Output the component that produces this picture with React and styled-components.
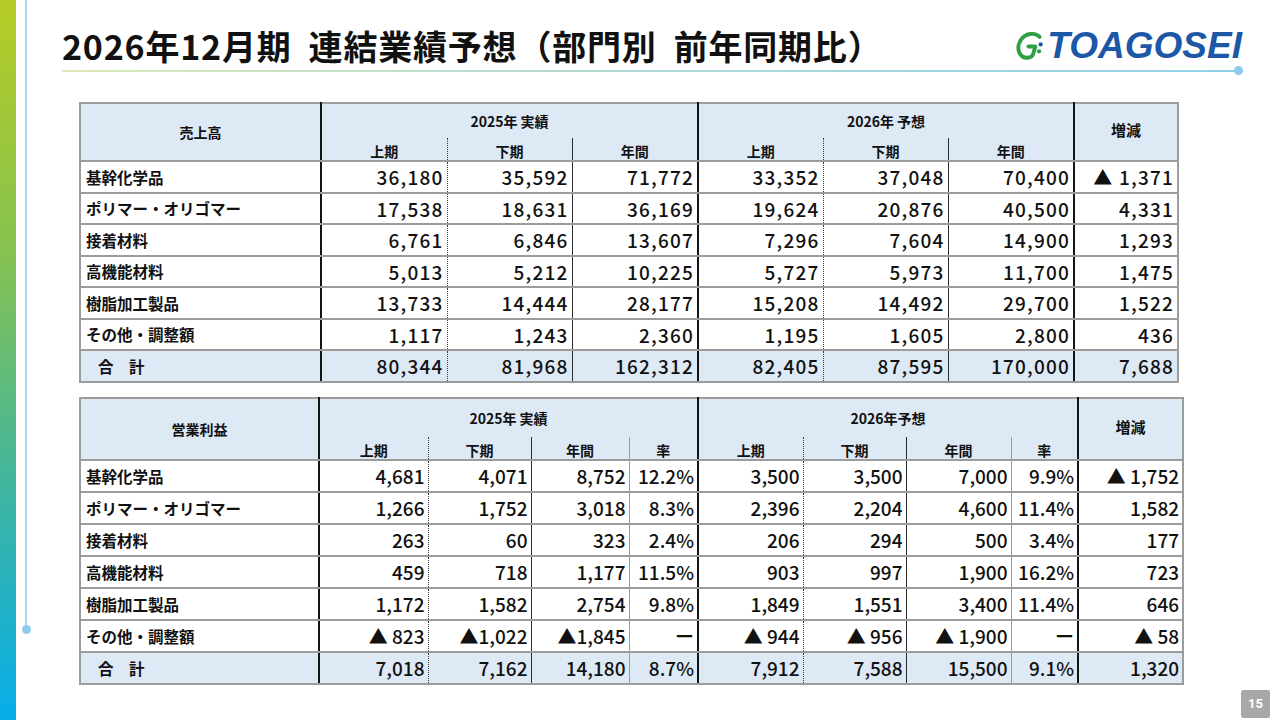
import React from "react";
import styled, { createGlobalStyle } from "styled-components";

const GlobalStyle = createGlobalStyle`
  body {
    margin: 0;
    background: #ffffff;
    font-family: "Noto Sans CJK JP", "Noto Sans", sans-serif;
    color: #111;
  }
`;

const Page = styled.div`
  width: 1280px;
  height: 720px;
  display: flex;
  overflow: hidden;
  background: #fff;
`;

const SideBar = styled.div`
  width: 16px;
  flex: 0 0 16px;
  background: linear-gradient(to bottom, #b6cc25 0%, #86c250 35%, #3fb5a0 68%, #06aeea 100%);
`;

const Rail = styled.div`
  width: 20px;
  flex: 0 0 20px;
  display: flex;
  flex-direction: column;
  align-items: center;
`;

const RailLine = styled.div`
  width: 2px;
  height: 627px;
  background: #a9d8ee;
`;

const RailDot = styled.div`
  width: 9px;
  height: 9px;
  border-radius: 50%;
  background: #8ccbec;
  margin-top: -2px;
`;

const Main = styled.div`
  flex: 1;
  display: flex;
  flex-direction: column;
  padding-top: 26px;
  min-width: 0;
`;

const TitleRow = styled.div`
  display: flex;
  align-items: center;
  justify-content: space-between;
  padding: 0 38px 0 26px;
  height: 40px;
`;

const Title = styled.h1`
  margin: 0;
  font-size: 34px;
  line-height: 40px;
  font-weight: 700;
  letter-spacing: 0.8px;
  white-space: pre;
`;

const Logo = styled.div`
  display: flex;
  align-items: center;
  gap: 1px;
`;

const LogoText = styled.span`
  font-family: "Liberation Sans", Arial, sans-serif;
  font-style: italic;
  font-weight: 700;
  font-size: 37px;
  line-height: 40px;
  color: #1c58a6;
`;

const RuleRow = styled.div`
  display: flex;
  align-items: center;
  padding-left: 26px;
`;

const Rule = styled.div`
  width: 1175px;
  height: 2px;
  background: linear-gradient(to right, #dbe9b4 0%, #b5dcd2 40%, #8ed0ea 100%);
`;

const RuleDot = styled.div`
  width: 9px;
  height: 9px;
  border-radius: 50%;
  background: #8ccbec;
  margin-left: -3px;
`;

const Table = styled.table`
  border-collapse: collapse;
  table-layout: fixed;
  width: ${(p) => p.$w}px;
  margin-left: 43px;
  margin-top: ${(p) => p.$top}px;
  border: 2px solid #9c9c9c;
`;

const borders = {
  group: "2px solid #141414",
  dot: "1px dotted #3a3a3a",
  thin: "1.5px solid #2a2a2a",
  gray: "1px solid #9c9c9c",
};

const HeadCell = styled.th`
  background: #dde9f5;
  font-weight: 700;
  font-size: ${(p) => (p.$big ? 15 : 14)}px;
  text-align: center;
  padding: 0;
  height: ${(p) => p.$h}px;
  vertical-align: ${(p) => p.$valign || "middle"};
  border-left: ${(p) => (p.$left ? borders[p.$left] : "none")};
  border-bottom: ${(p) => (p.$bottom ? "2px solid #9c9c9c" : "none")};
  line-height: 18px;
  padding-bottom: ${(p) => p.$pb || 0}px;
`;

const LabelCell = styled.td`
  font-size: 15.5px;
  font-weight: 700;
  padding: 0 0 0 ${(p) => (p.$total ? 17 : 5)}px;
  letter-spacing: ${(p) => (p.$total ? "6px" : "0")};
  height: ${(p) => p.$h}px;
  background: ${(p) => (p.$total ? "#dde9f5" : "#fff")};
  border-bottom: 2px solid #9c9c9c;
  white-space: nowrap;
  overflow: hidden;
`;

const NumCell = styled.td`
  font-size: 19px;
  line-height: 24px;
  font-weight: 500;
  text-align: right;
  padding: 1px 3px 0 0;
  letter-spacing: ${(p) => p.$ls}px;
  background: ${(p) => (p.$total ? "#dde9f5" : "#fff")};
  border-left: ${(p) => borders[p.$left]};
  border-bottom: 2px solid #9c9c9c;
  white-space: nowrap;
`;

const Footer = styled.div`
  display: flex;
  justify-content: flex-end;
  padding-right: 10px;
  margin-top: 5px;
`;

const PageNo = styled.div`
  width: 29px;
  height: 28px;
  background: #a8a8a8;
  color: #fff;
  font-family: "Roboto", sans-serif;
  font-weight: 700;
  font-size: 13px;
  display: flex;
  align-items: center;
  justify-content: center;
  border-radius: 2px;
`;

const salesRows = [
  ["基幹化学品", "36,180", "35,592", "71,772", "33,352", "37,048", "70,400", "▲ 1,371"],
  ["ポリマー・オリゴマー", "17,538", "18,631", "36,169", "19,624", "20,876", "40,500", "4,331"],
  ["接着材料", "6,761", "6,846", "13,607", "7,296", "7,604", "14,900", "1,293"],
  ["高機能材料", "5,013", "5,212", "10,225", "5,727", "5,973", "11,700", "1,475"],
  ["樹脂加工製品", "13,733", "14,444", "28,177", "15,208", "14,492", "29,700", "1,522"],
  ["その他・調整額", "1,117", "1,243", "2,360", "1,195", "1,605", "2,800", "436"],
  ["合 計", "80,344", "81,968", "162,312", "82,405", "87,595", "170,000", "7,688"],
];

const profitRows = [
  ["基幹化学品", "4,681", "4,071", "8,752", "12.2%", "3,500", "3,500", "7,000", "9.9%", "▲ 1,752"],
  ["ポリマー・オリゴマー", "1,266", "1,752", "3,018", "8.3%", "2,396", "2,204", "4,600", "11.4%", "1,582"],
  ["接着材料", "263", "60", "323", "2.4%", "206", "294", "500", "3.4%", "177"],
  ["高機能材料", "459", "718", "1,177", "11.5%", "903", "997", "1,900", "16.2%", "723"],
  ["樹脂加工製品", "1,172", "1,582", "2,754", "9.8%", "1,849", "1,551", "3,400", "11.4%", "646"],
  ["その他・調整額", "▲ 823", "▲1,022", "▲1,845", "ー", "▲ 944", "▲ 956", "▲ 1,900", "ー", "▲ 58"],
  ["合 計", "7,018", "7,162", "14,180", "8.7%", "7,912", "7,588", "15,500", "9.1%", "1,320"],
];

const salesSpec = {
  widths: [241, 126, 125, 126, 125, 125, 126, 104],
  left: ["group", "dot", "thin", "group", "dot", "thin", "group"],
  subs: ["上期", "下期", "年間"],
  head: [34, 22],
  rowH: 29.5,
  title: "売上高",
  groups: ["2025年 実績", "2026年 予想"],
  ls: 1.2,
  top: 27,
};

const profitSpec = {
  widths: [239, 109, 103, 98, 69, 105, 103, 105, 67, 105],
  left: ["group", "dot", "thin", "gray", "group", "dot", "thin", "gray", "group"],
  subs: ["上期", "下期", "年間", "率"],
  head: [38, 22],
  rowH: 30,
  title: "営業利益",
  groups: ["2025年 実績", "2026年予想"],
  ls: 0,
  top: 14,
};

function DataTable({ spec, rows }) {
  const n = spec.subs.length;
  const total = spec.widths.reduce((a, b) => a + b, 0);
  return (
    <Table $top={spec.top} $w={total}>
      <colgroup>
        {spec.widths.map((w, i) => (
          <col key={i} style={{ width: w }} />
        ))}
      </colgroup>
      <thead>
        <tr>
          <HeadCell rowSpan={2} $h={spec.head[0]} $bottom>
            {spec.title}
          </HeadCell>
          {spec.groups.map((g) => (
            <HeadCell key={g} colSpan={n} $left="group" $h={spec.head[0]}>
              {g}
            </HeadCell>
          ))}
          <HeadCell rowSpan={2} $left="group" $bottom $pb={4} $big>
            増減
          </HeadCell>
        </tr>
        <tr>
          {[0, 1].flatMap((g) =>
            spec.subs.map((s, i) => (
              <HeadCell
                key={`${g}-${s}`}
                $left={i === 0 ? "group" : spec.left[i]}
                $h={spec.head[1]}
                $valign="bottom"
                $bottom
              >
                {s}
              </HeadCell>
            ))
          )}
        </tr>
      </thead>
      <tbody>
        {rows.map((r) => {
          const isTotal = r[0] === "合 計";
          return (
            <tr key={r[0]}>
              <LabelCell $total={isTotal} $h={spec.rowH}>
                {r[0]}
              </LabelCell>
              {r.slice(1).map((v, i) => (
                <NumCell key={i} $left={spec.left[i]} $total={isTotal} $ls={spec.ls}>
                  {v}
                </NumCell>
              ))}
            </tr>
          );
        })}
      </tbody>
    </Table>
  );
}

function LogoMark() {
  return (
    <svg width="32" height="32" viewBox="0 0 30 30">
      <path
        d="M24 6.5 C20 2 10.5 2.5 6 10 C1.5 18 5.5 26.5 13 26 C15.5 25.8 17.2 24.5 17.8 23 L20 15.5 L13.5 15.5"
        fill="none"
        stroke="#2e9f44"
        strokeWidth="3.6"
        strokeLinecap="round"
        strokeLinejoin="round"
      />
      <circle cx="25" cy="13.5" r="2" fill="#1c58a6" />
      <circle cx="23.5" cy="20" r="2" fill="#2e9f44" />
    </svg>
  );
}

export default function App() {
  return (
    <>
      <GlobalStyle />
      <Page>
        <SideBar />
        <Rail>
          <RailLine />
          <RailDot />
        </Rail>
        <Main>
          <TitleRow>
            <Title>{"2026年12月期  連結業績予想（部門別  前年同期比）"}</Title>
            <Logo>
              <LogoMark />
              <LogoText>TOAGOSEI</LogoText>
            </Logo>
          </TitleRow>
          <RuleRow>
            <Rule />
            <RuleDot />
          </RuleRow>
          <DataTable spec={salesSpec} rows={salesRows} />
          <DataTable spec={profitSpec} rows={profitRows} />
          <Footer>
            <PageNo>15</PageNo>
          </Footer>
        </Main>
      </Page>
    </>
  );
}
